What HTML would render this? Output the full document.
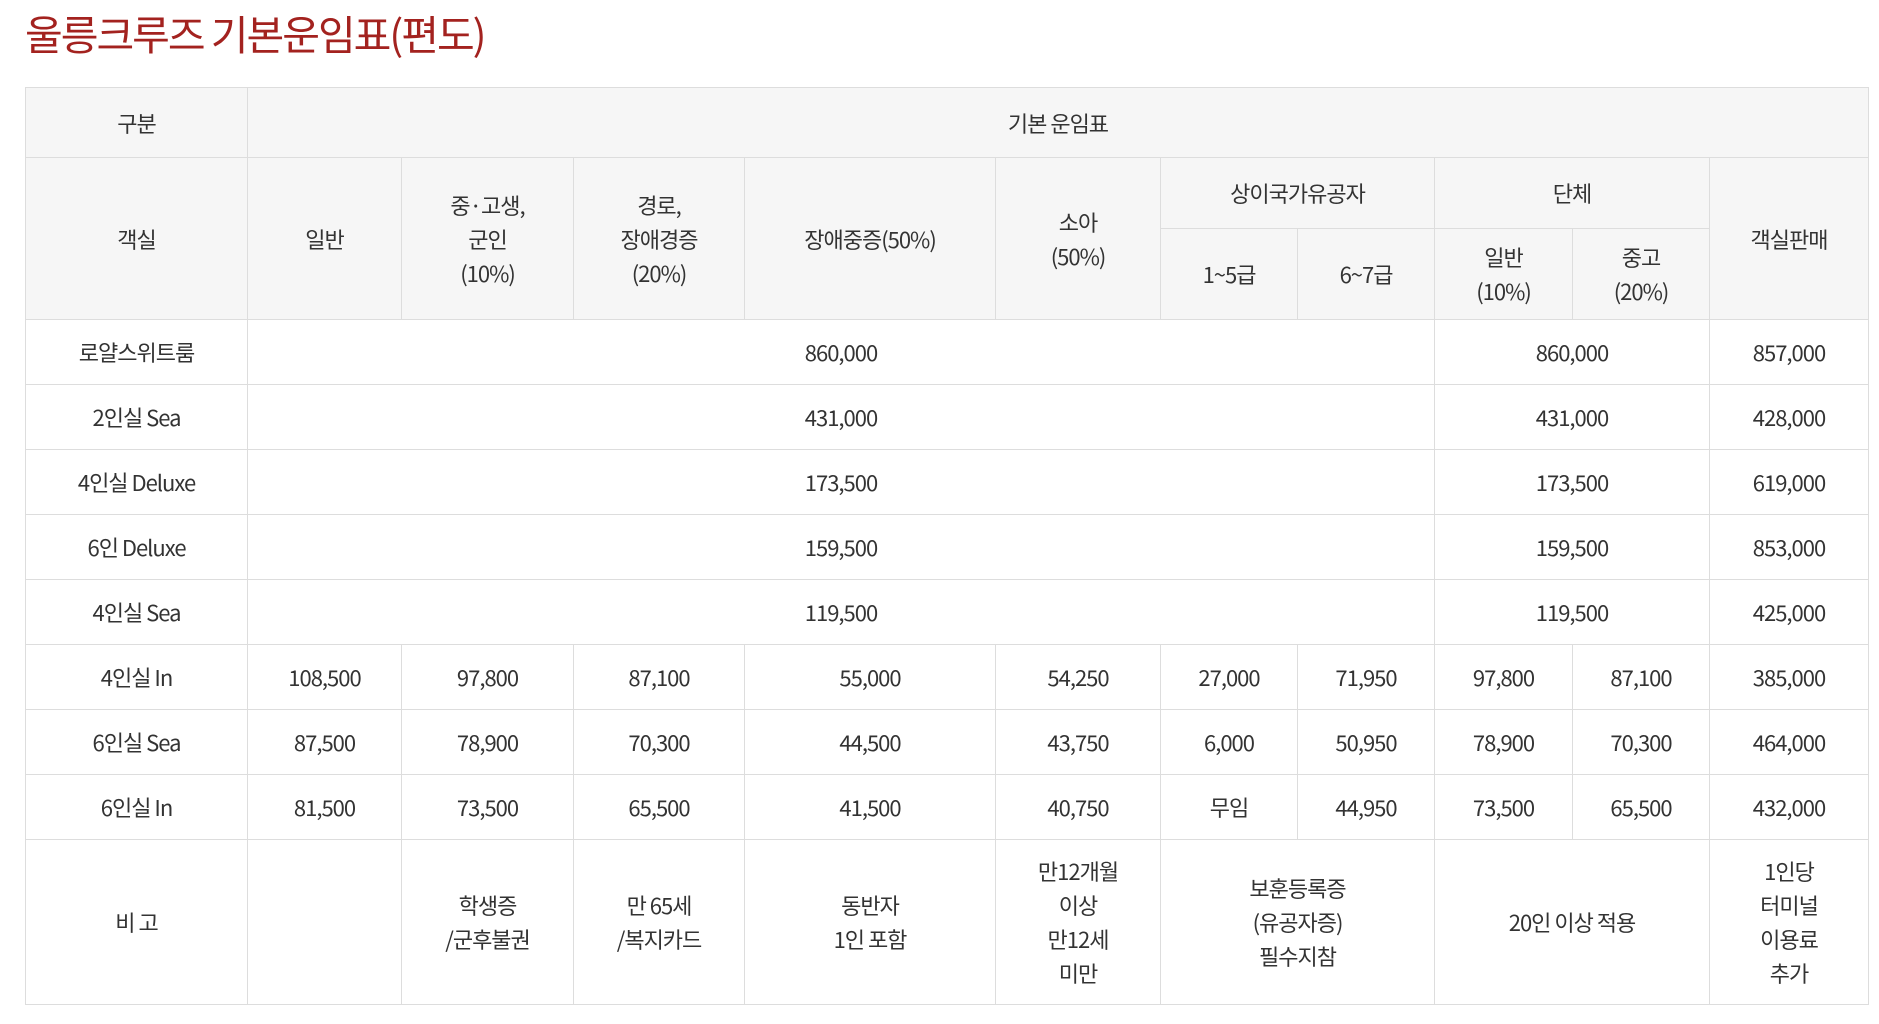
<!DOCTYPE html>
<html><head><meta charset="utf-8"><style>
body{margin:0;background:#fff;font-family:"Liberation Sans","Noto Sans CJK KR",sans-serif;color:#333;width:1879px;height:1024px;overflow:hidden}
h1{position:absolute;left:25px;top:2px;margin:0;font-weight:400;font-size:41px;color:#a3221f;letter-spacing:-2px;font-family:"Noto Sans CJK KR",sans-serif}
table{position:absolute;left:25px;top:87px;border-collapse:collapse;table-layout:fixed;font-size:22px;letter-spacing:-1px;font-family:"Noto Sans CJK KR",sans-serif}
td,th{border:1px solid #ddd;text-align:center;font-weight:400;padding:0;line-height:34px}
th{background:#f6f6f6}
</style></head><body>
<h1>울릉크루즈 기본운임표(편도)</h1>
<table>
<colgroup><col style="width:222px"><col style="width:154px"><col style="width:172px"><col style="width:171px"><col style="width:251px"><col style="width:165px"><col style="width:137px"><col style="width:137px"><col style="width:138px"><col style="width:137px"><col style="width:159px"></colgroup>
<tr style="height:70px"><th>구분</th><th colspan="10">기본 운임표</th></tr>
<tr style="height:71px"><th rowspan="2">객실</th><th rowspan="2">일반</th><th rowspan="2">중·고생,<br>군인<br>(10%)</th><th rowspan="2">경로,<br>장애경증<br>(20%)</th><th rowspan="2">장애중증(50%)</th><th rowspan="2">소아<br>(50%)</th><th colspan="2">상이국가유공자</th><th colspan="2">단체</th><th rowspan="2">객실판매</th></tr>
<tr style="height:91px"><th>1~5급</th><th>6~7급</th><th>일반<br>(10%)</th><th>중고<br>(20%)</th></tr>
<tr style="height:65px"><td>로얄스위트룸</td><td colspan="7">860,000</td><td colspan="2">860,000</td><td>857,000</td></tr>
<tr style="height:65px"><td>2인실 Sea</td><td colspan="7">431,000</td><td colspan="2">431,000</td><td>428,000</td></tr>
<tr style="height:65px"><td>4인실 Deluxe</td><td colspan="7">173,500</td><td colspan="2">173,500</td><td>619,000</td></tr>
<tr style="height:65px"><td>6인 Deluxe</td><td colspan="7">159,500</td><td colspan="2">159,500</td><td>853,000</td></tr>
<tr style="height:65px"><td>4인실 Sea</td><td colspan="7">119,500</td><td colspan="2">119,500</td><td>425,000</td></tr>
<tr style="height:65px"><td>4인실 In</td><td>108,500</td><td>97,800</td><td>87,100</td><td>55,000</td><td>54,250</td><td>27,000</td><td>71,950</td><td>97,800</td><td>87,100</td><td>385,000</td></tr>
<tr style="height:65px"><td>6인실 Sea</td><td>87,500</td><td>78,900</td><td>70,300</td><td>44,500</td><td>43,750</td><td>6,000</td><td>50,950</td><td>78,900</td><td>70,300</td><td>464,000</td></tr>
<tr style="height:65px"><td>6인실 In</td><td>81,500</td><td>73,500</td><td>65,500</td><td>41,500</td><td>40,750</td><td>무임</td><td>44,950</td><td>73,500</td><td>65,500</td><td>432,000</td></tr>
<tr style="height:165px"><td>비 고</td><td></td><td>학생증<br>/군후불권</td><td>만 65세<br>/복지카드</td><td>동반자<br>1인 포함</td><td>만12개월<br>이상<br>만12세<br>미만</td><td colspan="2">보훈등록증<br>(유공자증)<br>필수지참</td><td colspan="2">20인 이상 적용</td><td>1인당<br>터미널<br>이용료<br>추가</td></tr>
</table>
</body></html>
